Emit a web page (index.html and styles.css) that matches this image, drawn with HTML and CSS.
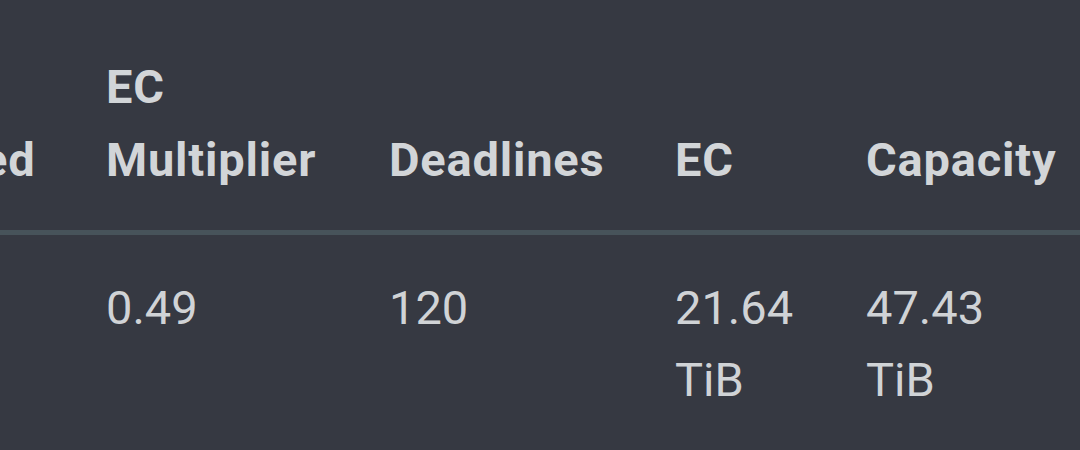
FILE: index.html
```html
<!DOCTYPE html>
<html>
<head>
<meta charset="utf-8">
<link rel="stylesheet" href="styles.css">
</head>
<body>
<div class="viewport">
  <table class="stats">
    <thead>
      <tr>
        <th class="c-sealed">Sealed</th>
        <th class="c-mult">EC Multiplier</th>
        <th class="c-dead">Deadlines</th>
        <th class="c-ec">EC</th>
        <th class="c-cap">Capacity</th>
      </tr>
    </thead>
    <tbody>
      <tr>
        <td>3</td>
        <td>0.49</td>
        <td>120</td>
        <td>21.64 TiB</td>
        <td>47.43 TiB</td>
      </tr>
    </tbody>
  </table>
</div>
</body>
</html>
```

FILE: styles.css
```css
html, body {
  margin: 0;
  padding: 0;
  background: #363942;
}
body {
  width: 1080px;
  height: 450px;
  overflow: hidden;
  font-family: Roboto, "Liberation Sans", sans-serif;
  color: #d2d5d8;
}
.viewport {
  width: 1080px;
  overflow: hidden;
}
.stats {
  border-collapse: collapse;
  table-layout: fixed;
  width: 1243px;
  margin-left: -150px;
  font-size: 47px;
  line-height: 73px;
}
.stats th,
.stats td {
  box-sizing: border-box;
  text-align: left;
  padding-left: 37px;
  padding-right: 37px;
}
.stats th {
  font-weight: 700;
  letter-spacing: 0.8px;
  vertical-align: bottom;
  padding-top: 50px;
  padding-bottom: 34px;
  border-bottom: 5px solid #47535a;
}
.c-sealed { width: 219px; }
.c-mult { width: 283px; }
.c-dead { width: 286px; }
.c-ec { width: 191px; }
.c-cap { width: 264px; }
.stats td {
  font-weight: 400;
  vertical-align: top;
  padding-top: 37px;
  padding-bottom: 30px;
  line-height: 72px;
  color: #d0d3d6;
  overflow: hidden;
}
.stats td:last-child {
  padding-right: 110px;
}
```
